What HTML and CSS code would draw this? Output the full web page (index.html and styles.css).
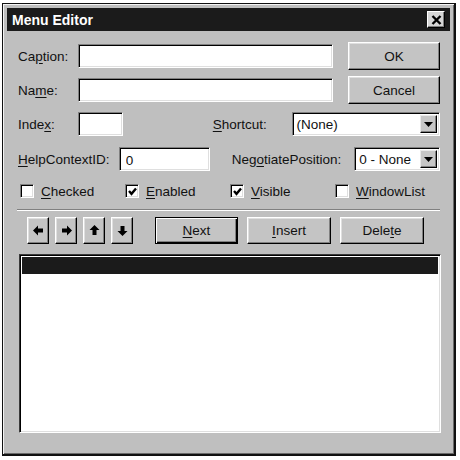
FILE: index.html
```html
<!DOCTYPE html>
<html lang="en">
<head>
    <meta charset="UTF-8">
    <title>Menu Editor</title>
    <link rel="stylesheet" href="styles.css">
</head>
<body>
    <div class="window">
        <div class="titlebar">
            <span class="title">Menu Editor</span>
            <button class="close" type="button">
                <svg width="11" height="10" viewBox="0 0 11 10"><path d="M1.5 1 L9.5 9 M9.5 1 L1.5 9" stroke="#000" stroke-width="2.4"/></svg>
            </button>
        </div>

        <div class="body">
            <div class="top">
                <div class="fields">
                    <div class="row">
                        <label class="lbl lbl-main">Ca<u>p</u>tion:</label>
                        <input class="field field-wide" type="text">
                    </div>
                    <div class="row">
                        <label class="lbl lbl-main">Na<u>m</u>e:</label>
                        <input class="field field-wide" type="text">
                    </div>
                </div>
                <div class="actions">
                    <button class="btn btn-side" type="button">OK</button>
                    <button class="btn btn-side" type="button">Cancel</button>
                </div>
            </div>

            <div class="row row-index">
                <label class="lbl lbl-main">Inde<u>x</u>:</label>
                <input class="field field-index" type="text">
                <label class="lbl lbl-shortcut"><u>S</u>hortcut:</label>
                <div class="combo combo-shortcut">
                    <span class="combo-text">(None)</span>
                    <span class="drop"><svg width="9" height="5" viewBox="0 0 9 5"><path d="M0 0 H9 L4.5 5 Z" fill="#000"/></svg></span>
                </div>
            </div>

            <div class="row row-help">
                <label class="lbl lbl-help"><u>H</u>elpContextID:</label>
                <input class="field field-help" type="text" value="0">
                <label class="lbl lbl-neg">Neg<u>o</u>tiatePosition:</label>
                <div class="combo combo-neg">
                    <span class="combo-text">0 - None</span>
                    <span class="drop"><svg width="9" height="5" viewBox="0 0 9 5"><path d="M0 0 H9 L4.5 5 Z" fill="#000"/></svg></span>
                </div>
            </div>

            <div class="checks">
                <label class="check"><span class="box"></span><span><u>C</u>hecked</span></label>
                <label class="check"><span class="box"><svg width="9" height="9" viewBox="0 0 9 9"><path d="M1 4 L3.5 6.8 L8 1.5" stroke="#000" stroke-width="2.4" fill="none"/></svg></span><span><u>E</u>nabled</span></label>
                <label class="check"><span class="box"><svg width="9" height="9" viewBox="0 0 9 9"><path d="M1 4 L3.5 6.8 L8 1.5" stroke="#000" stroke-width="2.4" fill="none"/></svg></span><span><u>V</u>isible</span></label>
                <label class="check"><span class="box"></span><span><u>W</u>indowList</span></label>
            </div>

            <div class="separator"></div>

            <div class="toolbar">
                <button class="btn btn-arrow" type="button"><svg width="11" height="11" viewBox="0 0 11 11"><path d="M0 5.5 L5 0.5 V3.5 H10 V7.5 H5 V10.5 Z" fill="#000"/></svg></button>
                <button class="btn btn-arrow" type="button"><svg width="11" height="11" viewBox="0 0 11 11"><path d="M11 5.5 L6 0.5 V3.5 H1 V7.5 H6 V10.5 Z" fill="#000"/></svg></button>
                <button class="btn btn-arrow" type="button"><svg width="11" height="11" viewBox="0 0 11 11"><path d="M5.5 0 L10.5 5 H7.5 V10 H3.5 V5 H0.5 Z" fill="#000"/></svg></button>
                <button class="btn btn-arrow" type="button"><svg width="11" height="11" viewBox="0 0 11 11"><path d="M5.5 11 L10.5 6 H7.5 V1 H3.5 V6 H0.5 Z" fill="#000"/></svg></button>
                <button class="btn btn-cmd btn-default" type="button"><u>N</u>ext</button>
                <button class="btn btn-cmd" type="button"><u>I</u>nsert</button>
                <button class="btn btn-cmd" type="button">Dele<u>t</u>e</button>
            </div>

            <div class="listbox">
                <div class="list-item selected"></div>
            </div>
        </div>
    </div>
</body>
</html>
```

FILE: styles.css
```css
body {
    margin: 0;
    background-color: #fff;
    font-family: "Liberation Sans", Arial, sans-serif;
    font-size: 13.5px;
    color: #111;
}
.window {
    box-sizing: border-box;
    width: 454px;
    height: 453px;
    margin: 3px 0 0 2px;
    padding: 4px;
    display: flex;
    flex-direction: column;
    background-color: #bfbfbf;
    border: 1px solid #111;
    border-right-width: 2px;
    border-bottom-width: 2px;
    box-shadow: inset 1px 1px #f4f4f4, inset -1px -1px #6a6a6a;
}
.titlebar {
    height: 23px;
    display: flex;
    align-items: center;
    justify-content: space-between;
    padding: 0 5px 0 5px;
    background-color: #1b1b1b;
}
.title {
    color: #fff;
    font-weight: bold;
    font-size: 14px;
}
.close {
    box-sizing: border-box;
    width: 18px;
    height: 17px;
    padding: 0;
    display: flex;
    align-items: center;
    justify-content: center;
    background-color: #d6d6d6;
    border: 1px solid;
    border-color: #fff #000 #000 #fff;
    box-shadow: inset -1px -1px #808080;
}
.body {
    flex: 1;
    padding: 11px 10px 0 11px;
}
u {
    text-underline-offset: 2px;
}

/* inputs and labels */
.top {
    display: flex;
}
.fields {
    display: flex;
    flex-direction: column;
    gap: 6px;
}
.row {
    display: flex;
    align-items: center;
    height: 28px;
}
.lbl {
    white-space: nowrap;
}
.lbl-main {
    width: 60px;
}
.field {
    box-sizing: border-box;
    height: 24px;
    padding: 2px 6px 0;
    font: inherit;
    color: #111;
    background-color: #fff;
    border: 1px solid;
    border-color: #808080 #fff #fff #808080;
    box-shadow: inset 1px 1px #000, inset -1px -1px #dfdfdf;
    outline: none;
}
.field-wide {
    width: 255px;
}
.actions {
    margin-left: auto;
    display: flex;
    flex-direction: column;
    gap: 6px;
}
.row-index {
    margin-top: 8px;
    height: 24px;
}
.field-index {
    width: 45px;
}
.lbl-shortcut {
    margin-left: 90px;
    width: 79px;
}
.combo {
    box-sizing: border-box;
    height: 24px;
    display: flex;
    align-items: center;
    background-color: #fff;
    border: 1px solid;
    border-color: #808080 #fff #fff #808080;
    box-shadow: inset 1px 1px #000, inset -1px -1px #dfdfdf;
    padding: 2px;
}
.combo-text {
    flex: 1;
    padding-left: 2px;
}
.drop {
    box-sizing: border-box;
    width: 17px;
    height: 18px;
    display: flex;
    align-items: center;
    justify-content: center;
    background-color: #c6c6c6;
    border: 1px solid;
    border-color: #e8e8e8 #000 #000 #e8e8e8;
    box-shadow: inset -1px -1px #808080;
}
.combo-shortcut {
    width: 149px;
}
.row-help {
    margin-top: 11px;
    height: 24px;
}
.lbl-help {
    width: 101px;
}
.field-help {
    width: 91px;
}
.lbl-neg {
    margin-left: 22px;
    width: 123px;
}
.combo-neg {
    width: 86px;
}

/* checkboxes */
.checks {
    display: flex;
    margin-top: 10px;
    height: 20px;
    padding-left: 2px;
}
.check {
    width: 107px;
    display: flex;
    align-items: center;
    gap: 7px;
}
.box {
    box-sizing: border-box;
    width: 14px;
    height: 14px;
    display: flex;
    align-items: center;
    justify-content: center;
    background-color: #fff;
    border: 1px solid;
    border-color: #808080 #fff #fff #808080;
    box-shadow: inset 1px 1px #000, inset -1px -1px #dfdfdf;
}
.separator {
    margin: 8px 0 0 -1px;
    border-top: 1px solid #808080;
    border-bottom: 1px solid #fff;
}

/* buttons */
.btn {
    box-sizing: border-box;
    padding: 0;
    font: inherit;
    color: #111;
    background-color: #c4c4c4;
    border: 1px solid;
    border-color: #fff #000 #000 #fff;
    box-shadow: inset -1px -1px #808080, inset 1px 1px #dfdfdf;
}
.btn-side {
    width: 92px;
    height: 28px;
}
.toolbar {
    display: flex;
    margin-top: 6px;
    padding-left: 9px;
    height: 27px;
}
.btn-arrow {
    width: 22px;
    height: 27px;
    margin-right: 6px;
    display: flex;
    align-items: center;
    justify-content: center;
}
.btn-cmd {
    width: 84px;
    height: 27px;
    margin-left: 8px;
}
.btn-default {
    width: 83px;
    margin-left: 16px;
    border-color: #000;
    box-shadow: inset 1px 1px #fff, inset -1px -1px #000, inset -2px -2px #808080;
}
.toolbar .btn-cmd + .btn-cmd {
    margin-left: 9px;
}

/* list */
.listbox {
    box-sizing: border-box;
    margin: 10px 0 0 1px;
    width: 422px;
    height: 179px;
    padding: 2px;
    background-color: #fff;
    border: 1px solid;
    border-color: #3a3a3a #fff #fff #3a3a3a;
    box-shadow: inset 1px 1px #000, inset -1px -1px #dfdfdf;
}
.list-item.selected {
    height: 17px;
    background-color: #1b1b1b;
}
```
